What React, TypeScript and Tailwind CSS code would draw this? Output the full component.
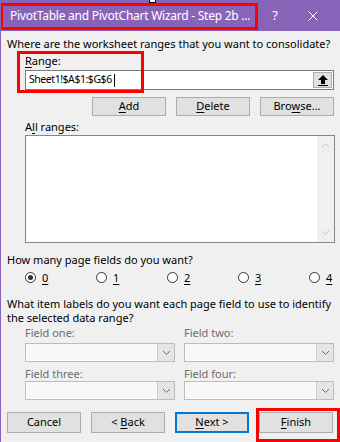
import React from "react";

const F = { fontFamily: '"Noto Sans", "DejaVu Sans", sans-serif' };

function U({ children }: { children: React.ReactNode }) {
  return <span className="underline underline-offset-2 decoration-1">{children}</span>;
}

function Btn({ children, def }: { children: React.ReactNode; def?: boolean }) {
  return (
    <div
      className={
        "w-[74px] h-full flex items-center justify-center bg-[#e1e1e1] text-[11px] text-black whitespace-pre " +
        (def ? "border-2 border-[#0078d7]" : "border border-[#adadad]")
      }
    >
      {children}
    </div>
  );
}

function Radio({ label, checked, last }: { label: string; checked?: boolean; last?: boolean }) {
  return (
    <div className={(last ? "" : "w-[71px] ") + "shrink-0 flex items-center gap-[6px]"}>
      <div className="w-[11px] h-[11px] shrink-0 rounded-full border border-[#333] bg-white flex items-center justify-center">
        {checked && <div className="w-[5px] h-[5px] rounded-full bg-[#333]" />}
      </div>
      <span className="text-[11px] leading-[13px]">
        <U>{label}</U>
      </span>
    </div>
  );
}

function Chevron({ down, color }: { down?: boolean; color: string }) {
  return (
    <svg width="9" height="6" viewBox="0 0 9 6">
      <polyline
        points={down ? "1,1 4.5,4.5 8,1" : "1,5 4.5,1.5 8,5"}
        fill="none"
        stroke={color}
        strokeWidth="1"
      />
    </svg>
  );
}

function Combo() {
  return (
    <div className="w-[150px] h-full flex border border-[#bcbcbc] bg-[#f7f7f7]">
      <div className="flex-1 border border-[#fcfcfc]" />
      <div className="w-[17px] bg-[#e5e5e5] border-l border-[#cccccc] flex items-center justify-center">
        <Chevron down color="#6d6d6d" />
      </div>
    </div>
  );
}

export default function App() {
  return (
    <div className="relative w-[340px] h-[442px] bg-[#f0f0f0] border-l border-[#8764b8] overflow-hidden text-black" style={F}>
      {/* title bar */}
      <div className="h-[31px] -ml-px bg-[#8764b8] flex items-center text-white">
        <div className="pl-[10px] text-[12px] tracking-[-0.25px] w-[262px] whitespace-nowrap">PivotTable and PivotChart Wizard - Step 2b ...</div>
        <div className="w-[20px] text-[13px] text-center ml-[3px]">?</div>
        <div className="flex-1 flex justify-center">
          <svg width="10" height="10" viewBox="0 0 10 10">
            <path d="M0.5 0.5 L9.5 9.5 M9.5 0.5 L0.5 9.5" stroke="white" strokeWidth="1" />
          </svg>
        </div>
      </div>

      <div className="pl-[6px] pr-[6px] flex flex-col">
        <div className="mt-[5px] h-[16px] leading-[16px] text-[11px] whitespace-nowrap">
          Where are the worksheet ranges that you want to consolidate?
        </div>
        <div className="mt-[1px] h-[16px] leading-[16px] text-[11px] ml-[18px]">
          <U>R</U>ange:
        </div>
        <div className="mt-[1px] h-[20px] ml-[18px] border border-[#7a7a7a] bg-white flex">
          <div className="flex-1 flex items-center pl-[3px] text-[10.5px] tracking-[-0.45px]">
            Sheet1!$A$1:$G$6<span className="inline-block w-px h-[13px] bg-black ml-[2px]" />
          </div>
          <div className="w-[19px] m-px bg-[#e1e1e1] border border-[#adadad] flex items-center justify-center">
            <svg width="10" height="11" viewBox="0 0 10 11">
              <path d="M5 0 L0 5 L3 5 L3 9 L7 9 L7 5 L10 5 Z" fill="black" />
              <rect x="0" y="10" width="10" height="1" fill="black" />
            </svg>
          </div>
        </div>
        <div className="mt-[7px] h-[19px] flex justify-end gap-[10px]">
          <Btn>
            <U>A</U>dd
          </Btn>
          <Btn>
            <U>D</U>elete
          </Btn>
          <Btn>
            Bro<U>w</U>se...
          </Btn>
        </div>
        <div className="mt-[3px] h-[16px] leading-[16px] text-[11px] ml-[18px]">
          A<U>l</U>l ranges:
        </div>
        <div className="h-[108px] ml-[18px] mr-[-1px] border border-[#828790] bg-white flex justify-end">
          <div className="w-[17px] bg-[#f0f0f0] flex flex-col items-center justify-between py-[6px]">
            <Chevron color="#c2c2c2" />
            <Chevron down color="#c2c2c2" />
          </div>
        </div>
        <div className="mt-[9px] h-[16px] leading-[16px] text-[11px]">How many page fields do you want?</div>
        <div className="mt-[3px] h-[13px] flex ml-[18px]">
          <Radio label="0" checked />
          <Radio label="1" />
          <Radio label="2" />
          <Radio label="3" />
          <Radio label="4" last />
        </div>
        <div className="mt-[13px] text-[11px] leading-[14px]">
          <div className="whitespace-nowrap">What item labels do you want each page field to use to identify</div>
          <div>the selected data range?</div>
        </div>
        <div className="mt-[1px] h-[13px] leading-[13px] text-[11px] text-[#6d6d6d] ml-[18px] flex gap-[9px]">
          <div className="w-[150px]">Field one:</div>
          <div className="w-[150px]">Field two:</div>
        </div>
        <div className="mt-[4px] h-[19px] ml-[18px] flex gap-[9px]">
          <Combo />
          <Combo />
        </div>
        <div className="mt-[5px] h-[13px] leading-[13px] text-[11px] text-[#6d6d6d] ml-[18px] flex gap-[9px]">
          <div className="w-[150px]">Field three:</div>
          <div className="w-[150px]">Field four:</div>
        </div>
        <div className="mt-[1px] h-[19px] ml-[18px] flex gap-[9px]">
          <Combo />
          <Combo />
        </div>
        <div className="mt-[12px] h-[21px] flex gap-[10px]">
          <Btn>Cancel</Btn>
          <Btn>
            {"< "}
            <U>B</U>ack
          </Btn>
          <Btn def>
            <U>N</U>
            {"ext >"}
          </Btn>
          <Btn>
            <U>F</U>inish
          </Btn>
        </div>
      </div>

      {/* annotation overlays */}
      <div className="absolute left-[-1px] top-[3px] w-[258px] h-[27px] border-[3px] border-[#ff0000]" />
      <div className="absolute left-[16px] top-[51px] w-[127px] h-[42px] border-[3px] border-[#ff0000]" />
      <div className="absolute left-[255px] top-[408px] w-[84px] h-[34px] border-[3px] border-[#ff0000]" />
      <div className="absolute left-[148px] top-0 w-[7px] h-[3px] bg-white border border-black border-t-0" />
    </div>
  );
}
